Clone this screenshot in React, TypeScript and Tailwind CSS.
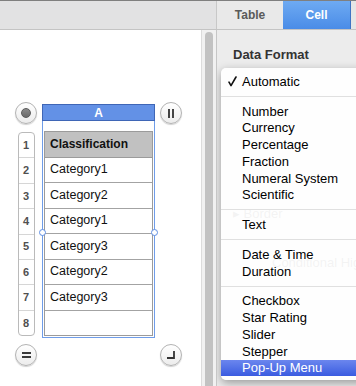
import React from 'react'

const rows = ['Category1', 'Category2', 'Category1', 'Category3', 'Category2', 'Category3', '']

const menuGroups: string[][] = [
  ['Automatic'],
  ['Number', 'Currency', 'Percentage', 'Fraction', 'Numeral System', 'Scientific'],
  ['Text'],
  ['Date & Time', 'Duration'],
  ['Checkbox', 'Star Rating', 'Slider', 'Stepper', 'Pop-Up Menu'],
]

function RoundButton({ children }: { children?: React.ReactNode }) {
  return (
    <div className="flex h-[22px] w-[22px] items-center justify-center rounded-full border border-[#b3b3b3] bg-gradient-to-b from-white to-[#ececec] shadow-[0_1px_1px_rgba(0,0,0,0.18)]">
      {children}
    </div>
  )
}

function Check() {
  return (
    <svg width="9" height="11" viewBox="0 0 9 11" className="block">
      <path d="M1 6.2 L3 9.6 L8 1" fill="none" stroke="#111" strokeWidth="1.6" strokeLinecap="round" strokeLinejoin="round" />
    </svg>
  )
}

export default function App() {
  return (
    <div
      className="flex h-[386px] w-[356px] flex-col overflow-hidden border-t border-[#7f7f7f] bg-white"
      style={{ fontFamily: '"Liberation Sans", Arial, sans-serif' }}
    >
      {/* title / tab bar */}
      <div className="flex h-[29px] shrink-0 border-b border-[#c4c4c4]">
        <div className="w-[217px] border-r border-[#c8c8c8] bg-[#e2e2e3]" />
        <div className="flex w-[66px] items-center justify-center bg-[#e9e9e9] text-[12px] font-bold text-[#5a5a5a]">Table</div>
        <div className="flex w-[68px] items-center justify-center border-r border-[#3f74c4] bg-gradient-to-b from-[#6eaaf2] to-[#4a8ce7] text-[12px] font-bold text-white">
          Cell
        </div>
        <div className="flex-1 bg-[#e6e6e6]" />
      </div>

      <div className="flex min-h-0 flex-1">
        {/* canvas */}
        <div className="w-[201px] shrink-0 bg-white pl-[15px] pt-[72px]">
          <div className="flex">
            {/* left controls + row numbers */}
            <div className="flex w-[22px] flex-col items-center">
              <RoundButton>
                <div className="h-[10px] w-[10px] rounded-full border border-[#5b5b5b] bg-gradient-to-b from-[#8a8a8a] to-[#6a6a6a]" />
              </RoundButton>
              <div className="mt-[8px] flex h-[204px] w-[17px] flex-col overflow-hidden rounded-[4px] border border-[#bababa] bg-white">
                {[1, 2, 3, 4, 5, 6, 7, 8].map((n, i) => (
                  <div
                    key={n}
                    className={`flex flex-1 items-center justify-center text-[11px] font-bold text-[#505050] ${i < 7 ? 'border-b border-[#d6d6d6]' : ''}`}
                  >
                    {n}
                  </div>
                ))}
              </div>
              <div className="mt-[8px]">
                <RoundButton>
                  <div className="flex flex-col gap-[2px]">
                    <div className="h-[2px] w-[9px] bg-[#3a3a3a]" />
                    <div className="h-[2px] w-[9px] bg-[#3a3a3a]" />
                  </div>
                </RoundButton>
              </div>
            </div>

            {/* selected table */}
            <div className="ml-[5px] flex w-[113px] flex-col pt-[2px]">
              <div className="flex h-[17px] items-center justify-center border border-[#3f66b6] bg-[#6391e6] text-[12px] font-bold text-white">
                A
              </div>
              <div className="relative border-x border-b border-[#6f9de9] px-[1px] pb-[1px] pt-[10px]">
                <div className="flex h-[205px] flex-col border border-[#9b9b9b] bg-white text-[12.5px] text-[#111]">
                  <div className="flex flex-1 items-center border-b border-[#9b9b9b] bg-[#c1c1c1] pl-[5px] text-[12px] font-bold">
                    Classification
                  </div>
                  {rows.map((r, i) => (
                    <div
                      key={i}
                      className={`flex flex-1 items-center pl-[5px] ${i < rows.length - 1 ? 'border-b border-[#a3a3a3]' : ''}`}
                    >
                      {r}
                    </div>
                  ))}
                </div>
                <div className="absolute left-[-4px] top-[108px] h-[7px] w-[7px] rounded-full border border-[#5f8fe3] bg-white" />
                <div className="absolute right-[-4px] top-[108px] h-[7px] w-[7px] rounded-full border border-[#5f8fe3] bg-white" />
              </div>
            </div>

            {/* right controls */}
            <div className="ml-[5px] flex w-[22px] flex-col">
              <RoundButton>
                <div className="flex gap-[2px]">
                  <div className="h-[9px] w-[2px] bg-[#444]" />
                  <div className="h-[9px] w-[2px] bg-[#444]" />
                </div>
              </RoundButton>
              <div className="mt-[220px]">
                <RoundButton>
                  <svg width="12" height="12" viewBox="0 0 12 12">
                    <path d="M9 2 V9 H2" fill="none" stroke="#333" strokeWidth="1.8" />
                  </svg>
                </RoundButton>
              </div>
            </div>
          </div>
        </div>

        {/* scroll bar */}
        <div className="w-[16px] shrink-0 border-l border-r border-[#dcdcdc] border-r-[#c6c6c6] bg-[#f1f1f1] pl-[3px] pt-[2px]">
          <div className="h-full w-[8px] rounded-t-full bg-[#c2c2c2]" />
        </div>

        {/* inspector panel */}
        <div className="relative flex-1 overflow-hidden bg-[#ececec] pl-[16px] pt-[17px] text-[13px] text-[#333]">
          <div className="h-[16px] font-bold leading-[16px]">Data Format</div>
          <div className="mt-[143px] h-[16px] whitespace-nowrap leading-[16px]">▸ Border</div>
          <div className="ml-[39px] mt-[33px] h-[16px] whitespace-nowrap leading-[16px]">Conditional Highlighting…</div>

          {/* pop-up menu */}
          <div className="absolute left-[4px] right-[-12px] top-[38px] rounded-[5px] bg-white/[0.94] pb-[4px] pt-[5px] text-[13px] text-black shadow-[0_3px_10px_rgba(0,0,0,0.35)]">
            {menuGroups.map((group, gi) => (
              <div key={gi}>
                {gi > 0 && (
                  <div className="flex h-[13px] items-center">
                    <div className="h-px w-full bg-[#e0e0e0]" />
                  </div>
                )}
                {group.map((item) => {
                  const active = item === 'Pop-Up Menu'
                  return (
                    <div
                      key={item}
                      className={`flex h-[16.75px] items-center ${active ? 'bg-gradient-to-b from-[#6b86ee] to-[#3b5be0] text-white' : ''}`}
                    >
                      <div className="flex w-[21px] justify-center pl-[1px]">{item === 'Automatic' && <Check />}</div>
                      <span className="leading-none">{item}</span>
                    </div>
                  )
                })}
              </div>
            ))}
          </div>
        </div>
      </div>
    </div>
  )
}
